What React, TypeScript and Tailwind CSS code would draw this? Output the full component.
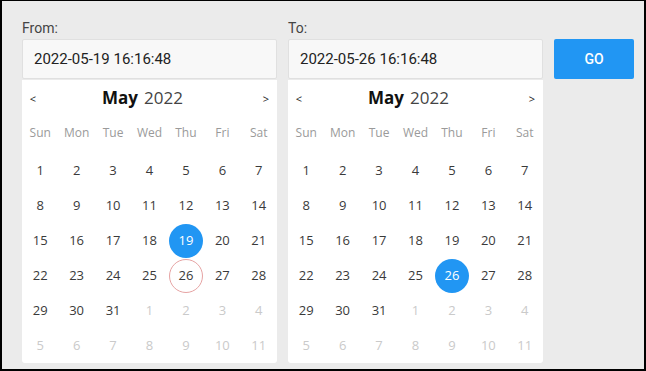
import React from 'react';

const WEEKDAYS = ['Sun', 'Mon', 'Tue', 'Wed', 'Thu', 'Fri', 'Sat'];

// May 2022 starts on Sunday; 6 rows shown
function buildDays() {
  const days: { n: number; muted: boolean }[] = [];
  for (let i = 1; i <= 31; i++) days.push({ n: i, muted: false });
  let next = 1;
  while (days.length < 42) days.push({ n: next++, muted: true });
  return days;
}

interface CalendarProps {
  selected: number;
  today?: number;
}

function Calendar({ selected, today }: CalendarProps) {
  const days = buildDays();
  return (
    <div className="mt-px bg-white rounded-b-[3px] h-[283px]">
      <div className="h-[35px] flex items-center px-[3px]">
        <span className="text-[11px] text-[#222] w-[16px] text-center pt-[4px]">&lt;</span>
        <div className="flex-1 flex justify-center items-baseline gap-[6px] pr-[14px]">
          <span className="text-[17px] font-bold text-[#111]">May</span>
          <span className="text-[17px] text-[#444]">2022</span>
        </div>
        <span className="text-[11px] text-[#222] w-[16px] text-center pt-[4px]">&gt;</span>
      </div>
      <div className="grid grid-cols-7 h-[38px] items-center pb-[2px]">
        {WEEKDAYS.map((d) => (
          <span key={d} className="text-center text-[12px] text-[#9a9a9a]">{d}</span>
        ))}
      </div>
      <div className="grid grid-cols-7">
        {days.map((d, i) => {
          const isSel = !d.muted && d.n === selected;
          const isToday = !d.muted && d.n === today;
          return (
            <div key={i} className="h-[35px] flex items-center justify-center">
              <span
                className={
                  'w-[34px] h-[34px] rounded-full flex items-center justify-center text-[13px] ' +
                  (isSel
                    ? 'bg-[#2196f3] text-white'
                    : isToday
                    ? 'border border-[#e6a3a3] text-[#3a3a3a]'
                    : d.muted
                    ? 'text-[#cacaca]'
                    : 'text-[#3a3a3a]')
                }
              >
                {d.n}
              </span>
            </div>
          );
        })}
      </div>
    </div>
  );
}

function DateField({ label, value, selected, today }: { label: string; value: string; selected: number; today?: number }) {
  return (
    <div className="w-[255px]">
      <div className="font-['Roboto',sans-serif] text-[14px] text-[#444] h-[22px] leading-[22px]">{label}</div>
      <div className="h-[40px] bg-[#f8f8f8] border border-[#e0e0e0] rounded-[2px] flex items-center px-[11px] font-['Roboto',sans-serif] text-[15px] text-[#222]">
        {value}
      </div>
      <Calendar selected={selected} today={today} />
    </div>
  );
}

export default function App() {
  return (
    <div className="w-[646px] h-[371px] bg-[#ebebeb] border-t border-l-2 border-b-2 border-r-2 border-black box-border font-['Open_Sans',sans-serif]">
      <div className="flex gap-[11px] pl-[20px] pt-[16px]">
        <DateField label="From:" value="2022-05-19 16:16:48" selected={19} today={26} />
        <DateField label="To:" value="2022-05-26 16:16:48" selected={26} />
        <button className="mt-[22px] w-[80px] h-[40px] bg-[#2196f3] rounded-[2px] text-white font-['Roboto',sans-serif] font-medium text-[14px]">
          GO
        </button>
      </div>
    </div>
  );
}
